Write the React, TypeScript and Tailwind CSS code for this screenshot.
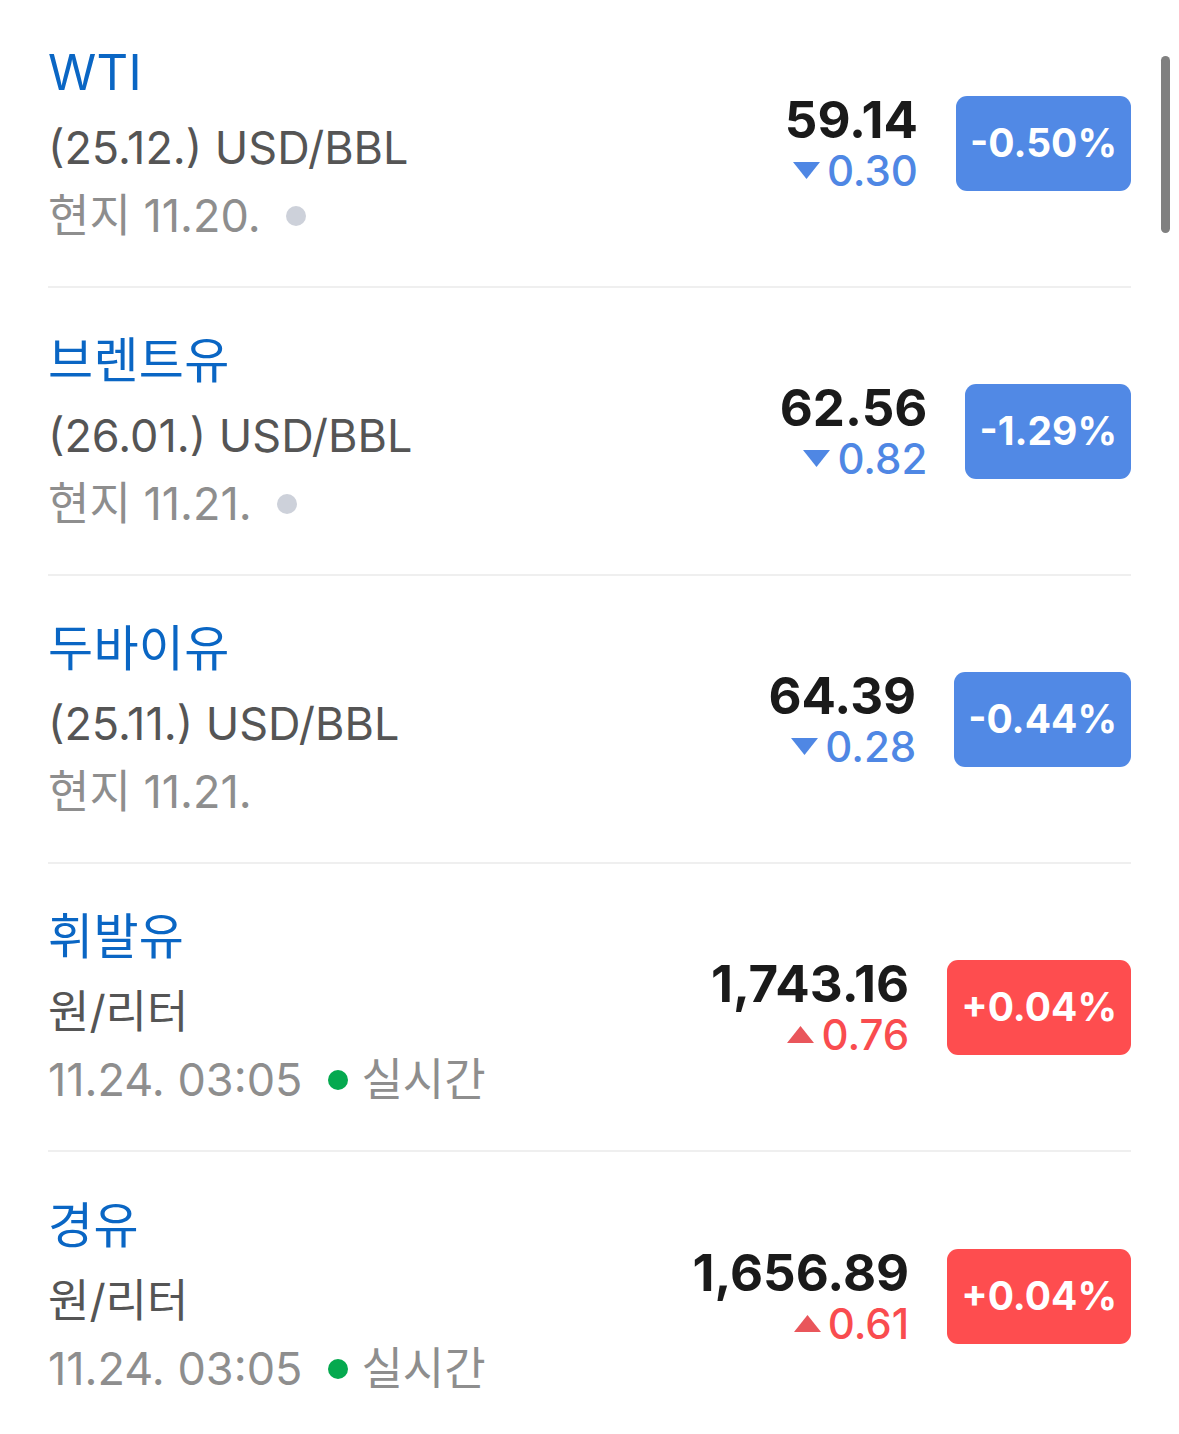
import { type FC } from "react";

type Item = {
  name: string;
  unit: string;
  date: string;
  dot?: "gray" | "green";
  live?: boolean;
  price: string;
  change: string;
  rate: string;
  up: boolean;
};

const items: Item[] = [
  { name: "WTI", unit: "(25.12.) USD/BBL", date: "현지 11.20.", dot: "gray", price: "59.14", change: "0.30", rate: "-0.50%", up: false },
  { name: "브렌트유", unit: "(26.01.) USD/BBL", date: "현지 11.21.", dot: "gray", price: "62.56", change: "0.82", rate: "-1.29%", up: false },
  { name: "두바이유", unit: "(25.11.) USD/BBL", date: "현지 11.21.", price: "64.39", change: "0.28", rate: "-0.44%", up: false },
  { name: "휘발유", unit: "원/리터", date: "11.24. 03:05", dot: "green", live: true, price: "1,743.16", change: "0.76", rate: "+0.04%", up: true },
  { name: "경유", unit: "원/리터", date: "11.24. 03:05", dot: "green", live: true, price: "1,656.89", change: "0.61", rate: "+0.04%", up: true },
];

// small triangle before the change value
const Arrow: FC<{ up: boolean }> = ({ up }) => (
  <svg width="27" height="17" viewBox="0 0 27 17" className="mr-[7px] mb-[2px]">
    {up ? (
      <polygon points="13.5,0 27,17 0,17" fill="#e9565b" />
    ) : (
      <polygon points="0,0 27,0 13.5,17" fill="#4f87e4" />
    )}
  </svg>
);

const Row: FC<{ item: Item; last: boolean }> = ({ item, last }) => {
  return (
    <div
      className={
        "flex items-center justify-between h-[288px] " +
        (last ? "" : "border-b-[2px] border-[#efefef]")
      }
    >
      <div className="flex flex-col">
        <div className="text-[49px] leading-[60px] text-[#0a66c4] tracking-[0.3px]">{item.name}</div>
        <div className="text-[45px] leading-[72px] text-[#555555] mt-[9px]">{item.unit}</div>
        <div className="flex items-center text-[45px] leading-[54px] mt-[5px] text-[#8e8e8e]">
          <span>{item.date}</span>
          {item.dot === "gray" && (
            <span className="ml-[25px] w-[20px] h-[20px] rounded-full bg-[#cdd1da]" />
          )}
          {item.dot === "green" && (
            <span className="ml-[26px] mr-[13px] w-[20px] h-[20px] rounded-full bg-[#05a94f]" />
          )}
          {item.live && <span>실시간</span>}
        </div>
      </div>
      <div className="flex items-center gap-[38px]">
        <div className="flex flex-col items-end">
          <div className="text-[51px] leading-[56px] font-bold text-[#1a1a1a]">
            {item.price}
          </div>
          <div
            className={
              "flex items-center text-[42px] leading-[46px] font-medium " +
              (item.up ? "text-[#f94c4f]" : "text-[#4f87e4]")
            }
          >
            <Arrow up={item.up} />
            <span>{item.change}</span>
          </div>
        </div>
        <div
          className={
            "h-[95px] px-[14px] rounded-[11px] flex items-center text-white text-[39px] font-bold " +
            (item.up ? "bg-[#fe4d4f]" : "bg-[#5189e5]")
          }
        >
          {item.rate}
        </div>
      </div>
    </div>
  );
};

const App: FC = () => {
  return (
    <div
      className="relative w-[1179px] h-[1434px] bg-white overflow-hidden px-[48px]"
      style={{ fontFamily: "Inter, 'Noto Sans CJK KR', sans-serif" }}
    >
      {items.map((item, i) => (
        <Row key={item.name} item={item} last={i === items.length - 1} />
      ))}
      {/* scroll indicator */}
      <div className="absolute left-[1161px] top-[56px] w-[9px] h-[177px] rounded-full bg-[#808080]" />
    </div>
  );
};

export default App;
